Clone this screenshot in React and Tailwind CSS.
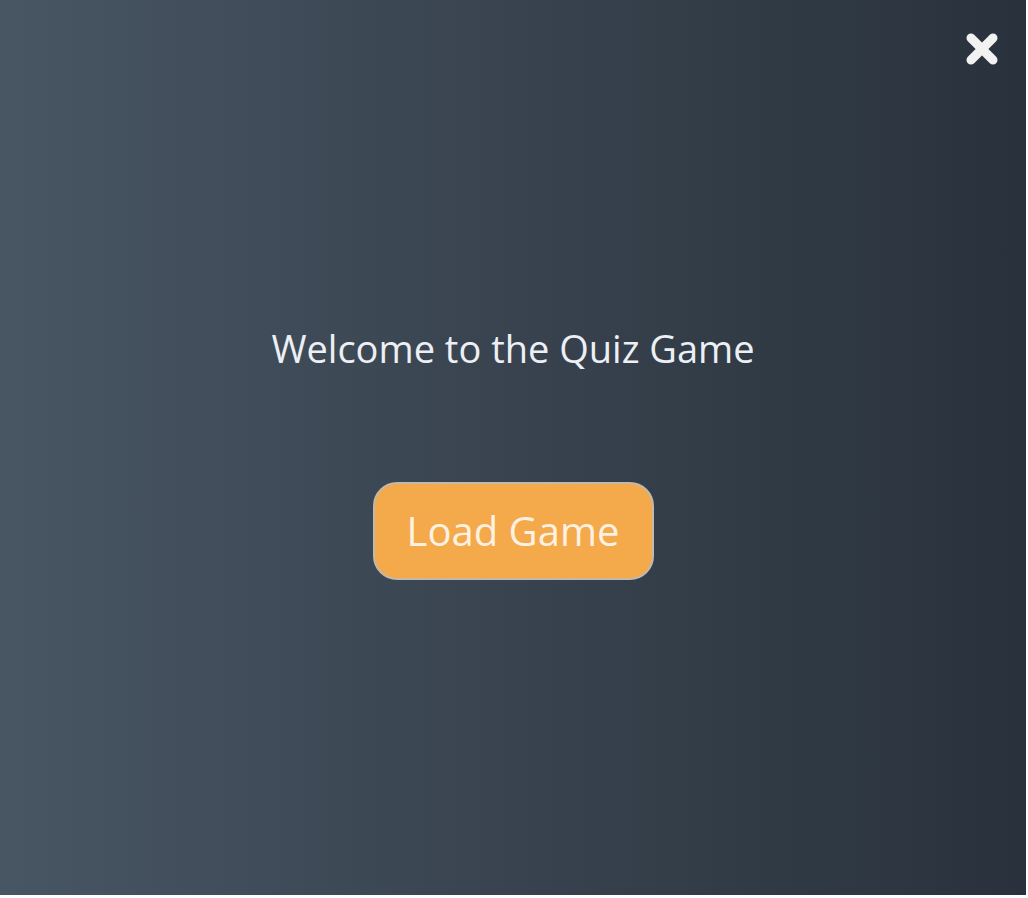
import React from 'react';

const CloseIcon = () => (
  <svg width="34" height="34" viewBox="0 0 34 34" fill="none">
    <path d="M6 6 L28 28 M28 6 L6 28" stroke="#f2f2f2" strokeWidth="9" strokeLinecap="round" />
  </svg>
);

const App = () => {
  return (
    <div className="w-[1028px] h-[898px] bg-white">
      <div
        className="relative w-[1026px] h-[895px] bg-gradient-to-r from-[#485563] to-[#29323c] flex flex-col items-center"
        style={{ fontFamily: '"Open Sans", "Noto Sans", sans-serif' }}
      >
        {/* Close */}
        <button className="absolute top-[32px] right-[27px]">
          <CloseIcon />
        </button>

        <h1 className="mt-[321px] text-[38px] leading-[54px] text-[#eceff3] font-normal">
          Welcome to the Quiz Game
        </h1>

        <button className="mt-[107px] w-[281px] h-[98px] rounded-[24px] border-2 border-[#c2b8ab] bg-[#f4a94b] text-[40px] text-[#fdf1e2]">
          Load Game
        </button>
      </div>
    </div>
  );
};

export default App;
